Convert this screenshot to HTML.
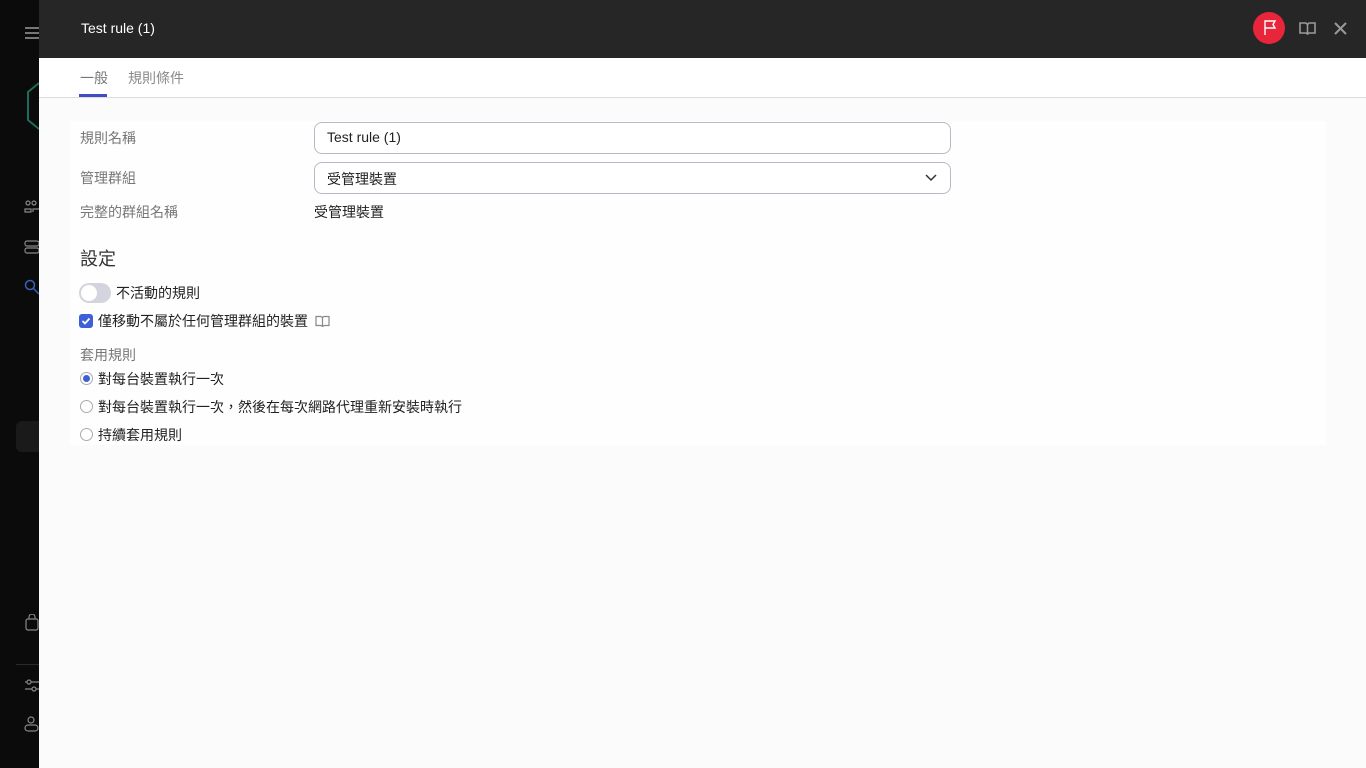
<!DOCTYPE html>
<html><head><meta charset="utf-8">
<style>
*{box-sizing:border-box;margin:0;padding:0}
body{width:1366px;height:768px;overflow:hidden;background:#0b0b0b;font-family:"Liberation Sans","Noto Sans CJK TC",sans-serif;position:relative}
.side{position:absolute;left:0;top:0;width:39px;height:768px;background:#0b0b0b}
.panel{position:absolute;left:39px;top:0;width:1327px;height:768px;background:#fbfbfb}
.hdr{height:58px;background:#262626;position:relative}
.hdr .t{position:absolute;left:42px;top:20px;color:#fff;font-size:14px}
.tabs{height:40px;background:#fff;border-bottom:1px solid #ddd;position:relative}
.tab{position:absolute;top:10px;font-size:14px;color:#8a8a8a}
.card{position:absolute;left:31px;top:121px;width:1256px;height:324px;background:#fefefe}
.lbl{position:absolute;left:41px;font-size:14px;color:#777}
.inp{position:absolute;left:275px;width:637px;height:32px;border:1px solid #b9b9c6;border-radius:8px;background:#fff;font-size:14px;color:#222;padding:6px 12px}
.txt{position:absolute;font-size:14px;color:#222}
.radio{position:absolute;left:41px;width:13px;height:13px;border:1px solid #aaa;border-radius:50%;background:#fff}
</style></head><body>
<div class="side">
 <div style="position:absolute;left:25px;top:27px;width:14px;height:2px;background:#777;box-shadow:0 5px 0 #777,0 10px 0 #777"></div>
 <svg style="position:absolute;left:26px;top:82px" width="13" height="48" fill="none" stroke="#1d6b5a" stroke-width="2"><path d="M13 1L2 10v28l11 9"/></svg>
 <svg style="position:absolute;left:24px;top:200px" width="15" height="14" viewBox="0 0 15 14" fill="none" stroke="#888" stroke-width="1.2"><circle cx="4" cy="3" r="2"/><circle cx="10" cy="3" r="2"/><path d="M1 12v-3h6v3zM9 12V9h6"/></svg>
 <svg style="position:absolute;left:24px;top:240px" width="15" height="14" fill="none" stroke="#888" stroke-width="1.2"><rect x="1" y="1" width="14" height="5" rx="2"/><rect x="1" y="8" width="14" height="5" rx="2"/></svg>
 <svg style="position:absolute;left:24px;top:279px" width="15" height="16" fill="none" stroke="#3a5fbf" stroke-width="1.5"><circle cx="6" cy="6" r="4.5"/><path d="M9 9l6 6"/></svg>
 <div style="position:absolute;left:16px;top:421px;width:30px;height:31px;background:#1a1a1a;border-radius:6px"></div>
 <svg style="position:absolute;left:25px;top:614px" width="14" height="18" fill="none" stroke="#888" stroke-width="1.2"><rect x="1" y="5" width="12" height="11" rx="2"/><path d="M4 5V3a3 3 0 016 0v2"/></svg>
 <div style="position:absolute;left:16px;top:664px;width:30px;height:1px;background:#2a2a2a"></div>
 <svg style="position:absolute;left:24px;top:678px" width="15" height="16" fill="none" stroke="#888" stroke-width="1.2"><path d="M1 4h14M1 11h14"/><circle cx="5" cy="4" r="2" fill="#0b0b0b"/><circle cx="10" cy="11" r="2" fill="#0b0b0b"/></svg>
 <svg style="position:absolute;left:24px;top:715px" width="15" height="18" fill="none" stroke="#888" stroke-width="1.2"><circle cx="7" cy="5" r="3"/><rect x="1" y="10" width="13" height="6" rx="3"/></svg>
</div>
<div class="panel">
 <div class="hdr"><div class="t">Test rule (1)</div>
  <div style="position:absolute;left:1214px;top:12px;width:32px;height:32px;border-radius:50%;background:#e8253a"></div>
  <svg style="position:absolute;left:1223px;top:19px" width="16" height="17" fill="none" stroke="#fff" stroke-width="1.4"><path d="M3 16V2h10l-2 3.5 2 3.5H3"/></svg>
  <svg style="position:absolute;left:1260px;top:21px" width="17" height="14" fill="none" stroke="#999" stroke-width="1.6"><path d="M1 2h6l1.5 1.5L10 2h6v10h-6l-1.5 1L7 12H1zM8.5 3.5V12"/></svg>
  <svg style="position:absolute;left:1295px;top:22px" width="13" height="13" stroke="#999" stroke-width="2"><path d="M1 1l11 11M12 1L1 12"/></svg>
 </div>
 <div class="tabs">
  <div class="tab" style="left:41px;color:#777">一般</div>
  <div style="position:absolute;left:40px;top:36px;width:28px;height:3px;background:#3f4fbf"></div>
  <div class="tab" style="left:89px">規則條件</div>
 </div>
 <div class="card"></div>
 <div class="lbl" style="top:128px">規則名稱</div>
 <div class="inp" style="top:122px">Test rule (1)</div>
 <div class="lbl" style="top:168px">管理群組</div>
 <div class="inp" style="top:162px">受管理裝置
  <svg style="position:absolute;right:13px;top:11px" width="12" height="8" fill="none" stroke="#333" stroke-width="1.5"><path d="M1 1l5 5 5-5"/></svg></div>
 <div class="lbl" style="top:202px">完整的群組名稱</div>
 <div class="txt" style="left:275px;top:202px">受管理裝置</div>
 <div class="txt" style="left:41px;top:245px;font-size:18px;color:#333">設定</div>
 <div style="position:absolute;left:40px;top:283px;width:32px;height:20px;border-radius:10px;background:#d4d4de"><div style="position:absolute;left:2px;top:2px;width:16px;height:16px;border-radius:50%;background:#fff"></div></div>
 <div class="txt" style="left:77px;top:283px">不活動的規則</div>
 <div style="position:absolute;left:40px;top:314px;width:14px;height:14px;border-radius:3px;background:#3f5fd8"></div>
 <svg style="position:absolute;left:42px;top:316px" width="10" height="10" fill="none" stroke="#fff" stroke-width="1.8"><path d="M1.5 5l2.5 2.5L8.5 2.5"/></svg>
 <div class="txt" style="left:59px;top:311px">僅移動不屬於任何管理群組的裝置</div>
 <svg style="position:absolute;left:276px;top:315px" width="15" height="12" fill="none" stroke="#888" stroke-width="1.2"><path d="M1 1.5h5l1.5 1 1.5-1h5v9H9l-1.5 1-1.5-1H1zM7.5 2.5v8"/></svg>
 <div class="lbl" style="top:345px">套用規則</div>
 <div class="radio" style="top:372px"><div style="position:absolute;left:2px;top:2px;width:7px;height:7px;border-radius:50%;background:#3f5fd8"></div></div>
 <div class="txt" style="left:59px;top:369px">對每台裝置執行一次</div>
 <div class="radio" style="top:400px"></div>
 <div class="txt" style="left:59px;top:397px">對每台裝置執行一次，然後在每次網路代理重新安裝時執行</div>
 <div class="radio" style="top:428px"></div>
 <div class="txt" style="left:59px;top:425px">持續套用規則</div>
</div>
</body></html>
